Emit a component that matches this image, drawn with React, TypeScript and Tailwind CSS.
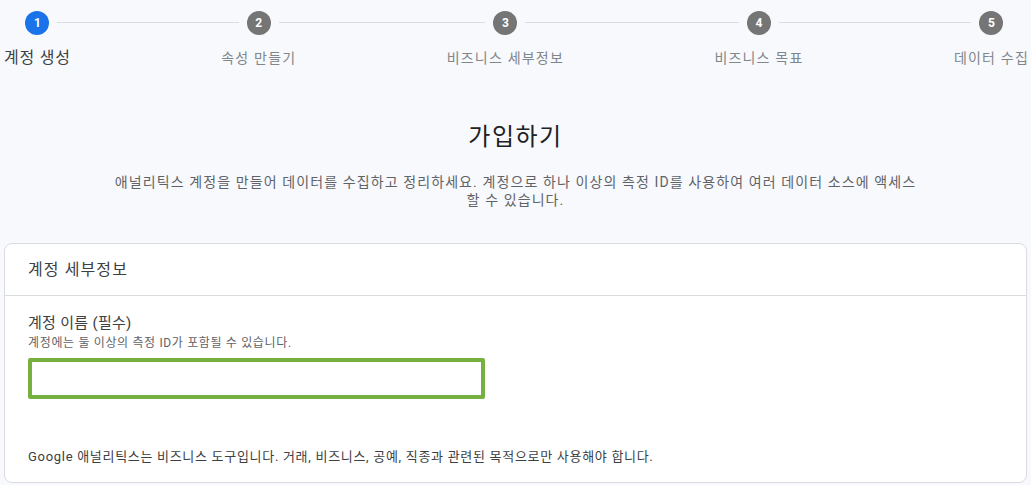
import React from "react";

const STEPS = ["계정 생성", "속성 만들기", "비즈니스 세부정보", "비즈니스 목표", "데이터 수집"];

const Stepper = () => (
  <div className="relative flex w-[1029px] justify-between pl-[4px] pt-[11px]">
    {/* connecting line behind the circles */}
    <div className="absolute left-[37px] right-[40px] top-[22px] h-px bg-[#dadce0]" />
    {STEPS.map((label, i) => (
      <div key={label} className="relative flex flex-col items-center">
        <div
          className={`flex h-6 w-6 items-center justify-center rounded-full text-[12px] font-bold text-white ring-[8px] ring-[#f8f9fc] ${
            i === 0 ? "bg-[#1a73e8]" : "bg-[#757575]"
          }`}
        >
          {i + 1}
        </div>
        <div
          className={`mt-[13px] whitespace-nowrap leading-[20px] ${
            i === 0
              ? "text-[16px] tracking-[0.8px] text-[#3c4043]"
              : "text-[14px] tracking-[1.2px] text-[#80868b]"
          }`}
        >
          {label}
        </div>
      </div>
    ))}
  </div>
);

const App = () => {
  return (
    <div className="min-h-screen overflow-hidden bg-[#f8f9fc] font-['Roboto','Noto_Sans_CJK_KR',sans-serif]">
      <Stepper />

      <div className="mt-[53px] text-center">
        <h1 className="text-[24px] font-normal leading-[32px] tracking-[1.5px] text-[#202124]">가입하기</h1>
        <p className="mx-auto mt-[20px] max-w-[810px] text-[14px] leading-[18px] tracking-[1.1px] text-[#5f6368]">
          애널리틱스 계정을 만들어 데이터를 수집하고 정리하세요. 계정으로 하나 이상의 측정 ID를 사용하여 여러 데이터 소스에 액세스
          할 수 있습니다.
        </p>
      </div>

      <div className="mx-[4px] mt-[34px] rounded-lg border border-[#dadce0] bg-white">
        <div className="flex h-[52px] items-center border-b border-[#dadce0] px-[23px] text-[16px] tracking-[1.1px] text-[#3c4043]">
          계정 세부정보
        </div>
        <div className="px-[23px] pb-[16px] pt-[17px]">
          <div className="text-[15px] leading-[20px] tracking-[0.3px] text-[#3c4043]">계정 이름 (필수)</div>
          <div className="mt-[2px] text-[12px] leading-[16px] tracking-[0.65px] text-[#5f6368]">
            계정에는 둘 이상의 측정 ID가 포함될 수 있습니다.
          </div>
          <div className="mt-[7px] h-[41px] w-[457px] rounded-[2px] border-[4px] border-[#76b041] bg-white" />
          <div className="mt-[49px] text-[13px] leading-[18px] tracking-[0.7px] text-[#3c4043]">
            Google 애널리틱스는 비즈니스 도구입니다. 거래, 비즈니스, 공예, 직종과 관련된 목적으로만 사용해야 합니다.
          </div>
        </div>
      </div>
    </div>
  );
};

export default App;
